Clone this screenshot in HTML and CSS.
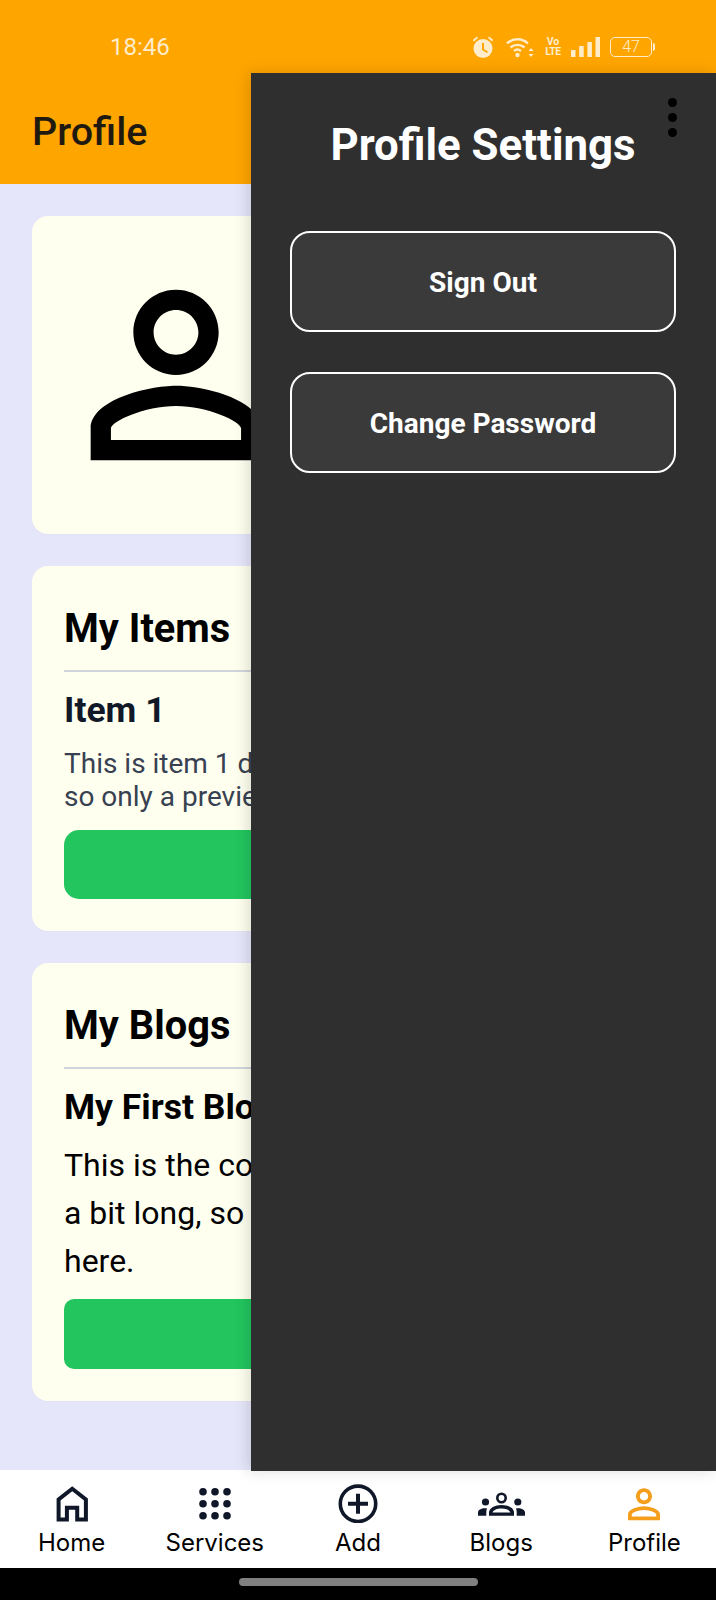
FILE: index.html
```html
<!DOCTYPE html>
<html lang="en">
<head>
<meta charset="utf-8">
<title>Profile</title>
<link rel="stylesheet" href="styles.css">
</head>
<body>
<div class="phone">
  <header class="top">
    <div class="status">
      <span class="clock">18:46</span>
      <div class="status-icons">
        <svg class="si" width="24" height="24" viewBox="0 0 24 24"><path class="sf" d="M3 6.500 7 3 5.800 1.600 1.800 5zM21 6.500 17 3l1.200-1.400 4 3.400z"/><path class="sf" fill-rule="evenodd" d="M12 4a9.500 9.500 0 1 0 0 19 9.500 9.500 0 0 0 0-19zm1 4v6.200l4 2.400-1 1.500-5-3V8z"/></svg>
        <svg class="si" width="30" height="24" viewBox="0 0 30 24"><path class="ss" d="M2 8.500a15 15 0 0 1 21 0M5.500 12.500a10.500 10.500 0 0 1 14 0M9 16a5.500 5.500 0 0 1 7 0"/><circle class="sf" cx="12.500" cy="20" r="2.200"/><path class="sf" d="m26 13 2.500 3h-5zM26 22l2.500-3h-5z"/></svg>
        <span class="volte"><span>Vo</span><span class="lte">LTE</span></span>
        <svg class="si" width="29" height="20" viewBox="0 0 29 20"><rect class="sf" x="0" y="13" width="4.500" height="7"/><rect class="sf" x="8.200" y="9" width="4.500" height="11"/><rect class="sf" x="16.400" y="5" width="4.500" height="15"/><rect class="sf" x="24.500" y="0" width="4.500" height="20"/></svg>
        <div class="battery"><span class="battery-body">47</span><span class="battery-tip"></span></div>
      </div>
    </div>
    <h1 class="page-title">Profile</h1>
  </header>

  <main class="content">
    <section class="card avatar-card">
      <svg class="avatar" width="256" height="256" viewBox="0 0 24 24"><path d="M12 5.900c1.160 0 2.100.94 2.100 2.100s-.94 2.100-2.100 2.100S9.900 9.160 9.900 8s.94-2.100 2.100-2.100m0 9c2.970 0 6.100 1.460 6.100 2.100v1.100H5.900V17c0-.64 3.130-2.100 6.100-2.100M12 4C9.790 4 8 5.790 8 8s1.790 4 4 4 4-1.790 4-4-1.790-4-4-4zm0 9c-2.670 0-8 1.340-8 4v3h16v-3c0-2.660-5.330-4-8-4z"/></svg>
    </section>

    <section class="card">
      <h2 class="card-title">My Items</h2>
      <h3 class="item-title">Item 1</h3>
      <p class="item-text">This is item 1 description, it is long<br>so only a preview is shown here.</p>
      <div class="green-btn"></div>
    </section>

    <section class="card">
      <h2 class="card-title">My Blogs</h2>
      <h3 class="blog-title">My First Blog</h3>
      <p class="blog-text">This is the content of my first blog, it is<br>a bit long, so only a preview is shown<br>here.</p>
      <div class="green-btn green-btn-small"></div>
    </section>
  </main>

  <nav class="tabs">
    <div class="tab">
      <svg width="36" height="40" viewBox="0 0 36 40"><path class="nav-s" d="M18.250 5.800 31.900 16.500V36.500H23.200V24.700H12.900V36.500H4.600V16.500Z"/></svg>
      <span class="tab-label">Home</span>
    </div>
    <div class="tab">
      <svg width="36" height="40" viewBox="0 0 36 40"><g class="nav-f"><circle cx="6" cy="8.700" r="3.800"/><circle cx="18" cy="8.700" r="3.800"/><circle cx="30" cy="8.700" r="3.800"/><circle cx="6" cy="20.700" r="3.800"/><circle cx="18" cy="20.700" r="3.800"/><circle cx="30" cy="20.700" r="3.800"/><circle cx="6" cy="32.700" r="3.800"/><circle cx="18" cy="32.700" r="3.800"/><circle cx="30" cy="32.700" r="3.800"/></g></svg>
      <span class="tab-label">Services</span>
    </div>
    <div class="tab">
      <svg width="42" height="40" viewBox="0 0 42 40"><circle class="nav-s nav-ring" cx="21" cy="20.800" r="17.700"/><path class="nav-s" d="M21 10.800V30.800M11 20.800H31"/></svg>
      <span class="tab-label">Add</span>
    </div>
    <div class="tab">
      <svg width="50" height="40" viewBox="0 0 50 40"><circle class="nav-s nav-head" cx="25.500" cy="15" r="4.200"/><circle class="nav-f" cx="9.500" cy="19" r="3.600"/><circle class="nav-f" cx="41.800" cy="19" r="3.600"/><path class="nav-f" fill-rule="evenodd" d="M13 32.700V29.500C13 25 19 22 25.500 22S38 25 38 29.500V32.700ZM16.500 29.500H34.500C33.500 27 30 25.500 25.500 25.500S17.500 27 16.500 29.500Z"/><path class="nav-f" d="M2 32.700V29.500C2 27 5 25.200 9 25.200L11 25.200C10.500 26.500 10.300 28 10.300 29.500V32.700ZM49 32.700V29.500C49 27 46 25.200 42 25.200L40 25.200C40.500 26.500 40.700 28 40.700 29.500V32.700Z"/></svg>
      <span class="tab-label">Blogs</span>
    </div>
    <div class="tab">
      <svg width="40" height="40" viewBox="2 1.400 20 20"><path class="nav-active" d="M12 5.900c1.160 0 2.100.94 2.100 2.100s-.94 2.100-2.100 2.100S9.900 9.160 9.900 8s.94-2.100 2.100-2.100m0 9c2.970 0 6.100 1.460 6.100 2.100v1.100H5.900V17c0-.64 3.130-2.100 6.100-2.100M12 4C9.790 4 8 5.790 8 8s1.790 4 4 4 4-1.790 4-4-1.790-4-4-4zm0 9c-2.670 0-8 1.340-8 4v3h16v-3c0-2.660-5.330-4-8-4z"/></svg>
      <span class="tab-label">Profile</span>
    </div>
  </nav>

  <div class="system-bar"><span class="pill"></span></div>

  <aside class="drawer">
    <div class="dots"><span></span><span></span><span></span></div>
    <h2 class="drawer-title">Profile Settings</h2>
    <button class="drawer-btn">Sign Out</button>
    <button class="drawer-btn">Change Password</button>
  </aside>
</div>
</body>
</html>
```

FILE: styles.css
```css
* { box-sizing: border-box; }
html, body { margin: 0; padding: 0; }
body { font-family: Roboto, "Liberation Sans", sans-serif; background: #000; }

.phone {
  position: relative;
  width: 716px;
  height: 1600px;
  display: flex;
  flex-direction: column;
  overflow: hidden;
}

.top { height: 184px; background: #ffa500; padding: 0 32px; flex: none; }
.status { height: 73px; padding: 20px 61px 0 78px; margin-right: -32px; display: flex; align-items: center; justify-content: space-between; }
.clock { color: #ffeccb; font-size: 24px; }
.status-icons { display: flex; align-items: center; gap: 10px; }
.si { display: block; }
.sf { fill: #ffeccb; }
.ss { fill: none; stroke: #ffeccb; stroke-width: 2.400; }
.volte { display: flex; flex-direction: column; align-items: center; color: #ffeccb; font-size: 10.500px; font-weight: 700; line-height: 10px; width: 16px; }
.lte { letter-spacing: -0.500px; }
.battery { display: flex; align-items: center; }
.battery-body { width: 42px; height: 20px; border: 1.500px solid #ffeccb; border-radius: 5px; color: #ffeccb; font-size: 16px; font-weight: 300; line-height: 17px; text-align: center; }
.battery-tip { width: 2px; height: 8px; background: #ffeccb; margin-left: 1px; border-radius: 0 2px 2px 0; }
.page-title { margin: 33px 0 0; font-size: 39.500px; line-height: 52px; font-weight: 500; color: #1f1a10; }

.content { flex: 1; background: #e6e6fa; padding: 32px 32px 0; display: flex; flex-direction: column; gap: 32px; min-height: 0; }
.card { background: #fffff0; border-radius: 16px; padding: 39px 32px 32px; box-shadow: 0 1px 3px rgba(0,0,0,.02); overflow: hidden; white-space: nowrap; }
.avatar-card { height: 318px; padding: 31px 16px; }
.avatar { display: block; fill: #000; }
.card-title { margin: 0; padding-bottom: 17px; font-size: 39.800px; line-height: 48px; font-weight: 700; color: #000; border-bottom: 2px solid #d1d5db; }
.item-title { margin: 16px 0 0; font-size: 35.500px; line-height: 44px; font-weight: 700; color: #111827; }
.item-text { margin: 15px 0 17px; font-size: 28px; line-height: 33px; color: #374151; }
.blog-title { margin: 16px 0 0; font-size: 35.500px; line-height: 44px; font-weight: 700; color: #000; }
.blog-text { margin: 12px 0 14px; font-size: 32px; line-height: 48px; color: #000; }
.green-btn { height: 69px; background: #22c55e; border-radius: 15px; }
.green-btn-small { border-radius: 10px; height: 70px; }

.tabs { height: 98px; background: #fff; display: grid; grid-template-columns: repeat(5, 1fr); padding: 13px 0 0; flex: none; }
.tab { display: flex; flex-direction: column; align-items: center; font-family: Inter, sans-serif; font-size: 24px; line-height: 38px; color: #000; }
.tab svg { display: block; flex: none; }
.tab-label { margin-top: 1px; }
.nav-s { fill: none; stroke: #0f1729; stroke-width: 4; }
.nav-ring { stroke-width: 3.600; }
.nav-head { stroke-width: 2.600; }
.nav-f { fill: #0f1729; }
.nav-active { fill: #f59e1b; }

.system-bar { height: 32px; background: #000; flex: none; display: flex; justify-content: center; padding-top: 10px; }
.pill { width: 239px; height: 8px; border-radius: 4px; background: #808080; }

.drawer {
  position: absolute;
  left: 251px;
  top: 73px;
  width: 465px;
  height: 1398px;
  background: #2f2f2f;
  box-shadow: -3px 0 14px rgba(0,0,0,.14);
  padding: 44px 40px 0 39px;
  display: flex;
  flex-direction: column;
  align-items: stretch;
}
.dots { position: absolute; right: 39px; top: 25px; display: flex; flex-direction: column; gap: 6px; }
.dots span { width: 9px; height: 9px; border-radius: 50%; background: #000; }
.drawer-title { margin: 0 0 58px; text-align: center; font-size: 43.800px; line-height: 56px; font-weight: 700; color: #fff; }
.drawer-btn { height: 101px; margin-bottom: 40px; padding-top: 3px; background: #3a3a3a; border: 2px solid #fff; border-radius: 20px; color: #fff; font: 700 28px Roboto, sans-serif; }
```
